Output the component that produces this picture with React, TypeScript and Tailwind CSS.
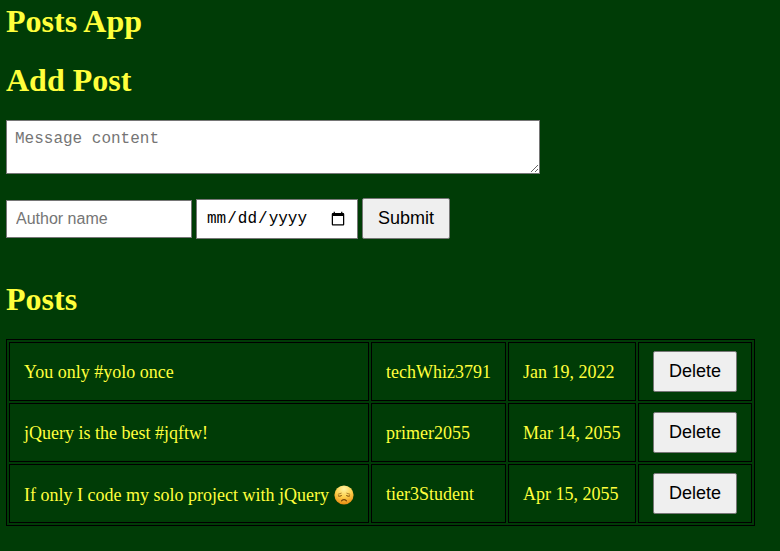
const posts = [
  { message: 'You only #yolo once', author: 'techWhiz3791', date: 'Jan 19, 2022' },
  { message: 'jQuery is the best #jqftw!', author: 'primer2055', date: 'Mar 14, 2055' },
  { message: 'If only I code my solo project with jQuery', author: 'tier3Student', date: 'Apr 15, 2055', sad: true },
];

function SadFace() {
  return (
    <svg className="ml-[5px] h-[20px] w-[20px] shrink-0" viewBox="0 0 20 20" fill="none">
      <defs>
        <radialGradient id="face" cx="0.5" cy="0.18" r="0.85">
          <stop offset="0" stopColor="#fff3a0" />
          <stop offset="0.5" stopColor="#fdd04c" />
          <stop offset="1" stopColor="#e8850d" />
        </radialGradient>
      </defs>
      <circle cx="10" cy="10" r="9.6" fill="url(#face)" />
      <g stroke="#7a4708" strokeLinecap="round">
        <path d="M4.2 9.2 L7.2 8.2" strokeWidth="0.6" />
        <path d="M15.8 9.2 L12.8 8.2" strokeWidth="0.6" />
        <path d="M4.3 11 Q5.8 11.8 7.4 10.7" strokeWidth="1" />
        <path d="M15.7 11 Q14.2 11.8 12.6 10.7" strokeWidth="1" />
        <path d="M7.6 15.8 Q10 13.6 12.4 15.8" strokeWidth="1.2" />
      </g>
    </svg>
  );
}

const button =
  "h-[41px] rounded-[2px] border border-[#767676] bg-[#efefef] pb-[2px] text-[18px] leading-[20px] text-black font-['Liberation_Sans',Arial,sans-serif]";
const heading = 'text-[32px] font-bold leading-[37px]';
const cell = 'border border-black py-0 pl-[14px] pr-0 align-middle whitespace-nowrap';

export default function App() {
  return (
    <main className="h-[551px] overflow-hidden bg-[#003c06] pl-[6px] pt-[3px] font-['Liberation_Serif','Times_New_Roman',serif] text-[18px] leading-[20px] text-[#ffff3c]">
      <h1 className={heading}>Posts App</h1>
      <h1 className={`${heading} mt-[22px]`}>Add Post</h1>
      <form className="mt-[21px]">
        <textarea
          placeholder="Message content"
          className="block h-[54px] w-[534px] resize border border-[#767676] bg-white px-[8px] pb-[7px] pt-[9px] font-['Liberation_Mono','Courier_New',monospace] text-[16px] leading-[18px] text-black placeholder:text-[#757575]"
        />
        <div className="mt-[24px] flex h-[41px] items-start gap-[4px]">
          <input
            type="text"
            placeholder="Author name"
            className="mt-[2px] h-[38px] w-[186px] border border-[#767676] bg-white px-[9px] font-['Liberation_Sans',Arial,sans-serif] text-[16px] text-black placeholder:text-[#757575]"
          />
          <input
            type="date"
            className="mt-px h-[40px] w-[162px] border border-[#767676] bg-white px-[9px] font-['Liberation_Mono','Courier_New',monospace] text-[16px] text-black"
          />
          <button type="button" className={`${button} w-[88px]`}>Submit</button>
        </div>
      </form>
      <h1 className={`${heading} mt-[42px]`}>Posts</h1>
      <table className="mt-[21px] w-[749px] table-fixed border-separate border-spacing-[2px] border border-black">
        <colgroup>
          <col className="w-[360px]" />
          <col className="w-[135px]" />
          <col className="w-[128px]" />
          <col className="w-[114px]" />
        </colgroup>
        <tbody>
          {posts.map((post) => (
            <tr key={post.author} className="h-[59px]">
              <td className={cell}>
                <div className={post.sad ? 'flex items-center pt-[2px]' : 'flex items-center'}>
                  {post.message}
                  {post.sad && <SadFace />}
                </div>
              </td>
              <td className={cell}>{post.author}</td>
              <td className={cell}>{post.date}</td>
              <td className={cell}>
                <button type="button" className={`${button} block w-[84px]`}>Delete</button>
              </td>
            </tr>
          ))}
        </tbody>
      </table>
    </main>
  );
}
